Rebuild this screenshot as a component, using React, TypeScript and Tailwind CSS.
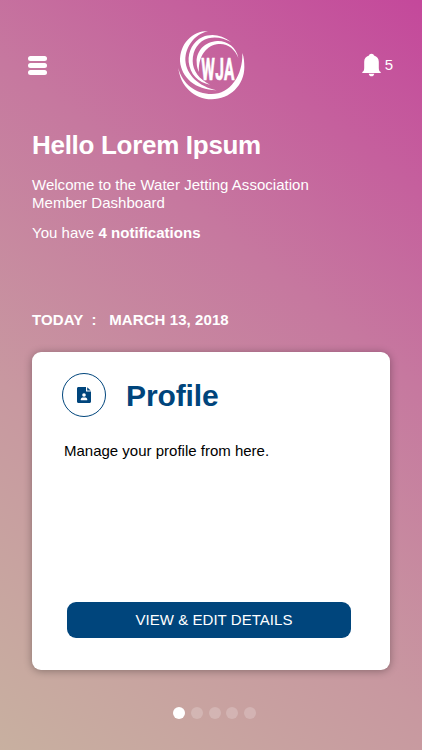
import clsx from "clsx";

const slides = ["profile", "events", "training", "documents", "contact"];

export default function App() {
  return (
    <div className="flex h-[750px] w-[422px] flex-col overflow-hidden bg-[linear-gradient(38deg,#c8b0a0_0%,#c898a0_34%,#c6789f_64%,#c4489b_100%)] font-['Liberation_Sans',Arial,sans-serif] text-white">
      <Header />

      <section className="flex flex-col pt-[28px] pl-8">
        <h1 className="text-[26px] leading-8 font-bold tracking-[-0.3px]">Hello Lorem Ipsum</h1>
        <p className="mt-[15px] text-[15px] leading-[18px] tracking-[0.02px]">
          Welcome to the Water Jetting Association
          <br />
          Member Dashboard
        </p>
        <p className="mt-3 text-[15px] leading-[18px] tracking-[0.03px]">
          You have <strong>4 notifications</strong>
        </p>
      </section>

      <p className="mt-[69px] pl-8 text-[15px] leading-[18px] font-bold tracking-[0.08px] whitespace-pre">
        {"TODAY  :   MARCH 13, 2018"}
      </p>

      <ProfileCard />

      <nav className="mt-[37px] ml-[173px] flex gap-[5.8px]">
        {slides.map((slide, index) => (
          <button
            key={slide}
            className={clsx("size-3 rounded-full", index === 0 ? "bg-white" : "bg-white/20")}
          />
        ))}
      </nav>
    </div>
  );
}

function Header() {
  return (
    <header className="flex h-[101px] items-start justify-between pr-[29px] pl-[28px]">
      <button className="mt-14 flex w-[67px] flex-col gap-[2px]">
        <span className="h-[5px] w-[19px] rounded-[2.5px] bg-white" />
        <span className="h-[5px] w-[19px] rounded-[2.5px] bg-white" />
        <span className="h-[5px] w-[19px] rounded-[2.5px] bg-white" />
      </button>

      <Logo />

      <button className="mt-[53px] flex w-[65px] justify-end gap-[4px]">
        <BellIcon />
        <span className="mt-[3px] text-[15px] leading-[18px]">5</span>
      </button>
    </header>
  );
}

function ProfileCard() {
  return (
    <article className="mt-[23px] ml-8 flex h-[318px] w-[358px] flex-col rounded-[9px] bg-white shadow-[0_1px_8px_rgba(0,0,0,0.33)]">
      <div className="mt-[21px] ml-[30px] flex items-center">
        <div className="flex size-[44px] items-center justify-center rounded-full border-[1.5px] border-[#00457c]">
          <ProfileIcon />
        </div>
        <h2 className="mt-[2px] ml-5 text-[30px] leading-9 font-bold tracking-[-0.1px] text-[#00457c]">Profile</h2>
      </div>
      <p className="mt-[25px] ml-8 text-[15px] leading-[18px] text-black">Manage your profile from here.</p>
      <button className="mt-auto mb-8 ml-[35px] h-9 w-[284px] rounded-[9px] bg-[#00457c] pl-[10px] text-[15px] tracking-[0.05px]">
        VIEW &amp; EDIT DETAILS
      </button>
    </article>
  );
}

function Logo() {
  return (
    <svg className="mt-[22px] h-[86px] w-[84px]" viewBox="0 0 252 258" fill="#fff">
      <path d="M114 27C66 27 29 66 30 118C34 166 75 204 140 205C87 194 49 160 46 115C46 72 74 38 114 27Z" />
      <path d="M183 60C156 38 124 34 98 45C69 58 54 87 56 120C60 156 84 182 120 188C88 172 68 146 68 117C68 84 86 57 115 49C139 43 162 49 183 60Z" />
      <path d="M205 108C199 76 172 56 142 57C104 59 79 87 80 120C80 134 83 143 87 150C84 113 102 74 140 67C171 62 194 80 205 108Z" />
      <path d="M25 138C31 193 73 232 125 232C180 232 223 189 223 136C223 120 222 106 217 93C219 160 181 216 125 216C77 216 37 186 25 138Z" />
      <text
        transform="translate(94 174) scale(.49 1)"
        fontSize="95"
        fontWeight="700"
        stroke="#fff"
        strokeWidth=".5"
        vectorEffect="non-scaling-stroke"
        letterSpacing="2"
        fontFamily="Roboto, 'Liberation Sans', sans-serif"
      >
        WJA
      </text>
    </svg>
  );
}

function BellIcon() {
  return (
    <svg className="h-6 w-[19px]" viewBox="0 0 19 24" fill="#fff">
      <path d="M9.5.8c1.4 0 2.3.8 2.5 1.8 3 1 4.800 3.200 4.800 6.200v6.100c0 2.300.7 3.600 1.900 4.100v.9H.3V19c1.200-.5 1.900-1.800 1.900-4.100V8.800C2.200 5.800 4 3.600 7 2.600 7.200 1.600 8.100.8 9.500.8Z" />
      <path d="M6.700 20.700h5.600c-.3 1.700-1.400 2.600-2.800 2.600s-2.500-.9-2.800-2.600Z" />
    </svg>
  );
}

function ProfileIcon() {
  return (
    <svg className="h-4 w-[14px]" viewBox="0 0 14 16">
      <path d="M1.500 0H9v4.500h5V14.500c0 .9-.6 1.500-1.500 1.500h-11C.6 16 0 15.400 0 14.500v-13C0 .6.600 0 1.500 0Z" fill="#00457c" />
      <path d="M10.200.3 13.700 3.600h-3.500Z" fill="#00457c" />
      <circle cx="7" cy="8" r="1.800" fill="#fff" />
      <path d="M3.800 13.300v-1c0-1.300 1.200-1.800 2.200-1.800h2c1 0 2.200.5 2.200 1.800v1Z" fill="#fff" />
    </svg>
  );
}
